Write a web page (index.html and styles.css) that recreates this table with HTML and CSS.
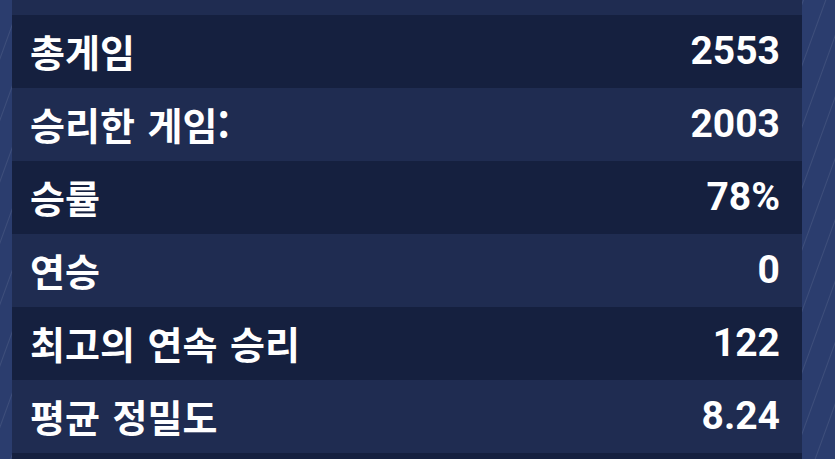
FILE: index.html
```html
<!DOCTYPE html>
<html lang="ko">
<head>
<meta charset="utf-8">
<link rel="stylesheet" href="styles.css">
</head>
<body>
<div class="frame">
  <div class="panel">
    <div class="row light cut"></div>
    <div class="row dark"><span class="label">총게임</span><span class="value">2553</span></div>
    <div class="row light"><span class="label">승리한 게임:</span><span class="value">2003</span></div>
    <div class="row dark"><span class="label">승률</span><span class="value">78%</span></div>
    <div class="row light"><span class="label">연승</span><span class="value">0</span></div>
    <div class="row dark"><span class="label">최고의 연속 승리</span><span class="value">122</span></div>
    <div class="row light"><span class="label">평균 정밀도</span><span class="value">8.24</span></div>
    <div class="row dark end"></div>
  </div>
</div>
</body>
</html>
```

FILE: styles.css
```css
html, body {
  margin: 0;
  padding: 0;
  width: 835px;
  height: 459px;
  overflow: hidden;
}
body {
  background-color: #2b3d6e;
  background-image: repeating-linear-gradient(110deg, rgba(255,255,255,0) 0px, rgba(255,255,255,0) 19px, rgba(255,255,255,0.09) 20px, rgba(255,255,255,0) 21px);
  font-family: Roboto, "Noto Sans CJK KR", sans-serif;
  color: #ffffff;
}
.frame {
  height: 459px;
  overflow: hidden;
  padding: 0 33px 0 12px;
}
.panel {
  display: flex;
  flex-direction: column;
}
.row {
  height: 73px;
  flex: none;
  display: flex;
  align-items: center;
  justify-content: space-between;
  padding: 0 22px 0 18px;
}
.row.cut {
  height: 15px;
}
.row.end {
  height: 6px;
}
.dark {
  background: #15203f;
}
.light {
  background: #1f2c51;
}
.label {
  font-family: "Noto Sans CJK KR", sans-serif;
  font-size: 38px;
  font-weight: 700;
  line-height: 1;
  margin-top: -2px;
  word-spacing: 2px;
}
.value {
  font-family: Roboto, sans-serif;
  font-size: 39px;
  font-weight: 700;
  line-height: 1;
  margin-top: -1px;
}
```
